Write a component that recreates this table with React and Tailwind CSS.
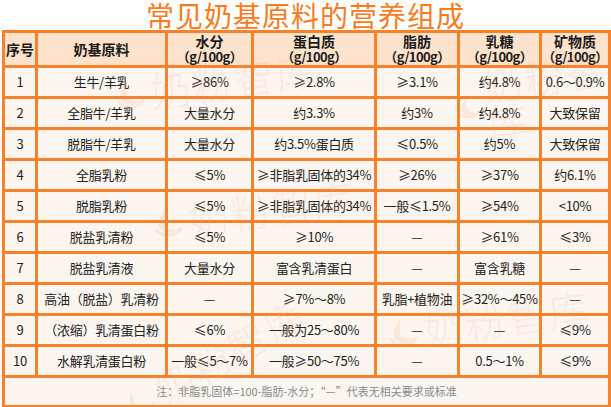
import React from "react";

const rows = [
  ["1", "生牛/羊乳", "≥86%", "≥2.8%", "≥3.1%", "约4.8%", "0.6～0.9%"],
  ["2", "全脂牛/羊乳", "大量水分", "约3.3%", "约3%", "约4.8%", "大致保留"],
  ["3", "脱脂牛/羊乳", "大量水分", "约3.5%蛋白质", "≤0.5%", "约5%", "大致保留"],
  ["4", "全脂乳粉", "≤5%", "≥非脂乳固体的34%", "≥26%", "≥37%", "约6.1%"],
  ["5", "脱脂乳粉", "≤5%", "≥非脂乳固体的34%", "一般≤1.5%", "≥54%", "<10%"],
  ["6", "脱盐乳清粉", "≤5%", "≥10%", "—", "≥61%", "≤3%"],
  ["7", "脱盐乳清液", "大量水分", "富含乳清蛋白", "—", "富含乳糖", "—"],
  ["8", "高油（脱盐）乳清粉", "—", "≥7%～8%", "乳脂+植物油", "≥32%～45%", "—"],
  ["9", "（浓缩）乳清蛋白粉", "≤6%", "一般为25～80%", "—", "—", "≤9%"],
  ["10", "水解乳清蛋白粉", "一般≤5～7%", "一般≥50～75%", "—", "0.5～1%", "≤9%"],
];

const widths = ["w-[33px]", "w-[130px]", "w-[86px]", "w-[123px]", "w-[83px]", "w-[82px]", "w-[69px]"];

// faint "奶粉智库" watermark laid over the table
const Mark = ({ className }) => (
  <div className={`absolute pointer-events-none flex items-center gap-1 text-[#f4a07e] opacity-[0.14] ${className}`}>
    <svg width="34" height="34" viewBox="0 0 34 34">
      <path d="M17 3 C10 10 6 16 8 22 C10 28 20 30 27 25 C20 26 14 23 14 17 C14 12 16 7 17 3Z" fill="#f08a55" />
      <path d="M4 22 C8 32 24 33 30 24" stroke="#f08a55" strokeWidth="3" fill="none" />
    </svg>
    <span className="text-[40px] leading-none font-light tracking-[2px]">奶粉智库</span>
  </div>
);

export default function App() {
  return (
    <div
      className="relative w-[611px] h-[407px] bg-white overflow-hidden"
      style={{ fontFamily: '"Noto Sans CJK SC", "Liberation Sans", sans-serif' }}
    >
      <h1 className="h-[30px] text-center text-[28px] leading-[30px] text-[#f77b21] tracking-[1px]">
        常见奶基原料的营养组成
      </h1>
      <table className="ml-[2px] w-[607px] border-collapse table-fixed bg-[#fdf6f0] text-[13px] text-[#222]">
        <thead>
          <tr className="h-[35px] bg-[#fde2cc] font-bold text-[14px] leading-[16px] text-[#1a1a1a]">
            <th className={`${widths[0]} border-[3px] border-[#f7822b] px-0`}>序号</th>
            <th className={`${widths[1]} border-[3px] border-[#f7822b]`}>奶基原料</th>
            {["水分", "蛋白质", "脂肪", "乳糖", "矿物质"].map((h, i) => (
              <th key={h} className={`${widths[i + 2]} border-[3px] border-[#f7822b] px-0`}>
                <div>{h}</div>
                <div className="whitespace-nowrap text-[13px] tracking-[-0.6px]">（g/100g）</div>
              </th>
            ))}
          </tr>
        </thead>
        <tbody>
          {rows.map((r) => (
            <tr key={r[0]} className="h-[31px]">
              {r.map((c, i) => (
                <td
                  key={i}
                  className="border-[3px] border-[#f7822b] text-center whitespace-nowrap px-0 tracking-[-0.3px]"
                >
                  {c}
                </td>
              ))}
            </tr>
          ))}
          <tr className="h-[30px]">
            <td colSpan={7} className="border-[3px] border-[#f7822b] text-center text-[11px] text-[#8a8a8a]">
              注：非脂乳固体=100-脂肪-水分；“—”代表无相关要求或标准
            </td>
          </tr>
        </tbody>
      </table>
      <Mark className="left-[112px] top-[62px] -rotate-[8deg]" />
      <Mark className="left-[455px] top-[58px] -rotate-[8deg]" />
      <Mark className="left-[150px] top-[190px] -rotate-[8deg]" />
      <Mark className="left-[385px] top-[300px] -rotate-[8deg]" />
      <Mark className="left-[110px] top-[340px] -rotate-[30deg]" />
    </div>
  );
}
